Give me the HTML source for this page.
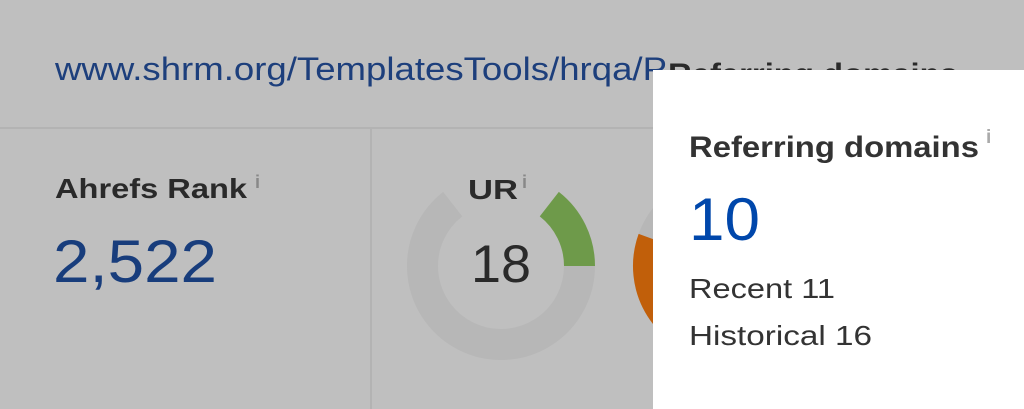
<!DOCTYPE html>
<html><head><meta charset="utf-8"><style>
html,body{margin:0;padding:0;width:1024px;height:409px;overflow:hidden;background:#bfbfbf;font-family:"Liberation Sans",Arial,sans-serif}
</style></head><body>
<svg width="1024" height="409" viewBox="0 0 1024 409" xmlns="http://www.w3.org/2000/svg" style="position:absolute;left:0;top:0" font-family="Liberation Sans, Arial, sans-serif">
<rect width="1024" height="409" fill="#bfbfbf"/>
<text x="55" y="80" font-size="32" fill="#1d3f7c" textLength="612" lengthAdjust="spacingAndGlyphs">www.shrm.org/TemplatesTools/hrqa/P</text>
<text x="668" y="84" font-size="30" font-weight="bold" fill="#2a2a2a" textLength="290" lengthAdjust="spacingAndGlyphs">Referring domains</text>
<rect x="0" y="127" width="1024" height="2" fill="#b3b3b3"/>
<rect x="370" y="129" width="2" height="280" fill="#b3b3b3"/>
<text x="55" y="198" font-size="28" font-weight="bold" fill="#2a2a2a" textLength="192" lengthAdjust="spacingAndGlyphs">Ahrefs Rank</text>
<text x="255" y="188" font-size="18" font-weight="bold" fill="#888">i</text>
<text x="53" y="282" font-size="60" fill="#183d7c" textLength="164" lengthAdjust="spacingAndGlyphs">2,522</text>
<path d="M579.5,266 A78.5 78.5 0 1 1 452.7,204.1" fill="none" stroke="#b7b7b7" stroke-width="31"/>
<path d="M549.3,204.1 A78.5 78.5 0 0 1 579.5,266" fill="none" stroke="#6e9a4a" stroke-width="31"/>
<text x="468" y="199" font-size="28" font-weight="bold" fill="#2a2a2a" textLength="50" lengthAdjust="spacingAndGlyphs">UR</text>
<text x="522" y="188" font-size="18" font-weight="bold" fill="#888">i</text>
<text x="471" y="282" font-size="53" fill="#2a2a2a" textLength="60" lengthAdjust="spacingAndGlyphs">18</text>
<circle cx="727" cy="266" r="78.5" fill="none" stroke="#b7b7b7" stroke-width="31"/>
<path d="M727,344.5 A78.5 78.5 0 0 1 653.2,239.2" fill="none" stroke="#c15f0a" stroke-width="31"/>
<rect x="653" y="70" width="371" height="339" fill="#ffffff"/>
<text x="689" y="157" font-size="30" font-weight="bold" fill="#333" textLength="290" lengthAdjust="spacingAndGlyphs">Referring domains</text>
<text x="986" y="143" font-size="19" font-weight="bold" fill="#aaa">i</text>
<text x="689" y="240" font-size="60" fill="#0047ab" textLength="71" lengthAdjust="spacingAndGlyphs">10</text>
<text x="689" y="298" font-size="28" fill="#333" textLength="146" lengthAdjust="spacingAndGlyphs">Recent 11</text>
<text x="689" y="345" font-size="28" fill="#333" textLength="183" lengthAdjust="spacingAndGlyphs">Historical 16</text>
</svg>
</body></html>
